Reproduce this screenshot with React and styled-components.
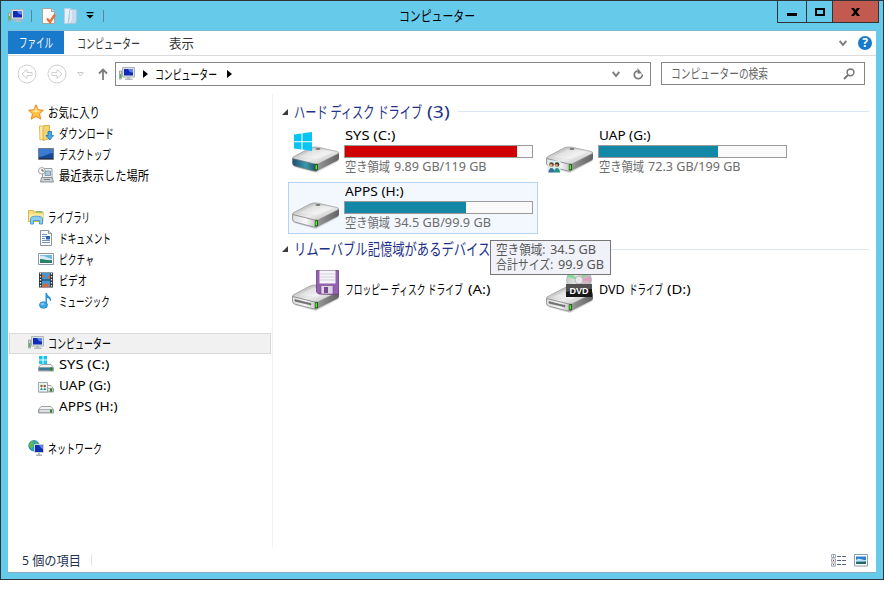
import React, { useLayoutEffect, useRef, useState } from "react";
import styled, { createGlobalStyle } from "styled-components";

const Global = createGlobalStyle`
  * { box-sizing: border-box; }
  body {
    margin: 0;
    background: #fff;
    overflow: hidden;
    font-family: "Noto Sans", "Noto Sans CJK JP", sans-serif;
    font-size: 13px;
    color: #000;
  }
  svg { display: block; flex: none; }
`;

/* ---------- condensed label ---------- */
const LabelBox = styled.span`
  display: block;
  flex: none;
  width: ${(p) => p.$w}px;
  height: ${(p) => p.$h || 18}px;
  line-height: ${(p) => p.$h || 18}px;
  font-size: ${(p) => p.$size || 13}px;
  color: ${(p) => p.$color || "#000"};
  margin-left: ${(p) => p.$ml || 0}px;
`;
const LabelText = styled.span`
  display: inline-block;
  vertical-align: top;
  white-space: pre;
  transform-origin: 0 50%;
`;
function Label({ w, h, size, color, ml, children }) {
  const ref = useRef(null);
  const [k, setK] = useState(1);
  useLayoutEffect(() => {
    setK(w / ref.current.offsetWidth);
  }, [w]);
  return (
    <LabelBox $w={w} $h={h} $size={size} $color={color} $ml={ml}>
      <LabelText ref={ref} style={{ transform: `scaleX(${k})` }}>{children}</LabelText>
    </LabelBox>
  );
}
const TextRun = styled.div`
  display: flex;
  padding-bottom: ${(p) => p.$up || 0}px;
`;
/* parts: [text, width, gap before] */
const Run = ({ parts, up, ...rest }) => (
  <TextRun $up={up}>
    {parts.map(([t, w, ml], i) => (
      <Label key={i} w={w} ml={ml} {...rest}>{t}</Label>
    ))}
  </TextRun>
);

/* ---------- window frame ---------- */
const Window = styled.div`
  position: relative;
  width: 884px;
  height: 580px;
  background: #66cbea;
  border: 1px solid #2f3438;
  display: flex;
  flex-direction: column;
`;
const TitleBar = styled.header`
  height: 29px;
  display: grid;
  grid-template-columns: 391px 76px 1fr;
  padding-left: 7px;
`;
const QuickAccess = styled.div`
  display: flex;
  height: 29px;
  align-items: center;
`;
const Separator = styled.i`
  width: 1px;
  height: 12px;
  background: #5e8596;
  margin: 0 ${(p) => p.$r || 0}px 0 ${(p) => p.$l || 0}px;
`;
const Gap = styled.i`
  flex: none;
  width: ${(p) => p.$w}px;
`;
const TitleText = styled.h1`
  margin: 0;
  padding-top: 5px;
  font-weight: 400;
`;
const CaptionButtons = styled.div`
  display: flex;
  justify-content: flex-end;
  margin: -1px 4px 0 0;
`;
const CaptionButton = styled.button`
  width: ${(p) => p.$w}px;
  height: 23px;
  margin: 0 0 0 -1px;
  padding: 0;
  border: 1px solid #2f3438;
  background: ${(p) => (p.$close ? "#c35a50" : "#66cbea")};
  display: flex;
  align-items: center;
  justify-content: center;
`;
const Client = styled.main`
  margin: 0 7px 0;
  height: 543px;
  background: #fff;
  border-top: 1px solid #7db9d1;
  border-bottom: 1px solid #83aec3;
  display: flex;
  flex-direction: column;
`;
const Ribbon = styled.nav`
  height: 25px;
  border-bottom: 1px solid #dadbdc;
  display: flex;
  align-items: center;
  padding-right: 4px;
`;
const FileTab = styled.div`
  width: 56px;
  height: 23px;
  margin-bottom: 1px;
  background: #1979ca;
  padding: 2px 0 0 11px;
`;
const Spacer = styled.div`flex: 1;`;
const NavBar = styled.div`
  height: 38px;
  display: flex;
  padding: 6px 11px 0 9px;
`;
const NavButtons = styled.div`
  width: 98px;
  height: 24px;
  display: flex;
  align-items: center;
`;
const Field = styled.div`
  width: ${(p) => p.$w}px;
  height: ${(p) => p.$h}px;
  border: 1px solid #858585;
  display: flex;
  align-items: center;
  padding: 0 6px 0 ${(p) => p.$pl}px;
  margin-right: ${(p) => p.$mr || 0}px;
`;
const Body = styled.div`
  display: flex;
  height: 454px;
`;
const Tree = styled.aside`
  width: 265px;
  padding: 8px 1px 0 1px;
  border-right: 1px solid #f1f1f1;
`;
const TreeRow = styled.div`
  height: 21px;
  display: flex;
  align-items: center;
  gap: ${(p) => (p.$child ? 5 : 4)}px;
  padding-left: ${(p) => (p.$child ? 29 : 19)}px;
  padding-bottom: 1px;
  margin-bottom: ${(p) => (p.$last ? 21 : 0)}px;
  background: ${(p) => (p.$selected ? "#f1f1f1" : "transparent")};
  outline: ${(p) => (p.$selected ? "1px solid #dadada" : "none")};
  outline-offset: -1px;
`;
const Content = styled.section`
  flex: 1;
  padding: 4px 7px 0 8px;
`;
const GroupHeader = styled.div`
  height: ${(p) => p.$h}px;
  padding-bottom: ${(p) => p.$pb || 0}px;
  display: flex;
  align-items: center;
`;
const Rule = styled.i`
  flex: 1;
  height: 1px;
  margin-left: 8px;
  background: #d9e8f4;
`;
const Tiles = styled.div`
  display: grid;
  grid-template-columns: 250px 250px;
  column-gap: 4px;
  row-gap: 4px;
  margin-left: 7px;
`;
const Tile = styled.div`
  height: 52px;
  display: flex;
  align-items: ${(p) => (p.$center ? "center" : "stretch")};
  padding: 1px 3px;
  border: 1px solid ${(p) => (p.$hot ? "#b5d3f2" : "transparent")};
  background: ${(p) => (p.$hot ? "#f3f8ff" : "transparent")};
`;
const TileInfo = styled.div`
  margin-left: 4px;
  display: flex;
  flex-direction: column;
`;
const Meter = styled.div`
  width: 189px;
  height: 13px;
  margin-top: 2px;
  border: 1px solid #9b9b9b;
  background: #fafafa;
`;
const MeterFill = styled.div`
  height: 11px;
  background: ${(p) => (p.$full ? "#d10000" : "#1388a6")};
`;
const Tooltip = styled.div`
  position: absolute;
  left: 489px;
  top: 239px;
  width: 121px;
  height: 35px;
  background: #f1f2f9;
  border: 1px solid #767676;
  padding: 1px 0 0 5px;
`;
const StatusBar = styled.footer`
  height: 24px;
  display: flex;
  align-items: center;
  padding: 0 8px 0 14px;
`;

/* ---------- icons ---------- */
const ComputerIcon = () => (
  <svg width="16" height="16" viewBox="0 0 16 16">
    <path d="M.5 5h2v8h-2z" fill="#d8dcdf" stroke="#8c9499" strokeWidth=".8" />
    <path d="M1 8h1v4H1z" fill="#35c829" />
    <path d="M3.500 1.500h12v9.500h-12z" fill="#dfe3e8" stroke="#aab3ba" />
    <path d="M5 3h9v6.500H5z" fill="#102bb5" />
    <path d="M9 3h5v3.500C11 7 10 5 9 3z" fill="#5c84e8" />
    <path d="M8 11h3v1.500h2.500V14H6v-1.500h2z" fill="#b4bcc2" />
  </svg>
);
const PropertiesIcon = () => (
  <svg width="16" height="16" viewBox="0 0 16 16">
    <path d="M1.500.5h9l3 3v12h-12z" fill="#fbfbfa" stroke="#a9a39b" />
    <path d="M10.500 .5v3h3" fill="#ddd" stroke="#a9a39b" />
    <path d="M6 10.500l3 3.500 5-7.500" fill="none" stroke="#e8713b" strokeWidth="2.300" />
  </svg>
);
const NewFolderIcon = () => (
  <svg width="14" height="16" viewBox="0 0 14 16">
    <path d="M.5.5h5l3 1v14h-8z" fill="#e9f1f8" stroke="#b9d0e2" />
    <path d="M6 1.500h6.500V12l-1 3.500H4z" fill="#c9dcec" stroke="#a8c6dd" />
    <path d="M7 2v10l-2 3" stroke="#f8fbfd" fill="none" />
  </svg>
);
const CustomizeIcon = () => (
  <svg width="8" height="7" viewBox="0 0 8 7">
    <path d="M.5 0h7v1.300H.5zM.5 3h7L4 6.500z" fill="#000" />
  </svg>
);
const RoundArrow = ({ flip }) => (
  <svg width="20" height="20" viewBox="0 0 20 20" fill="none" stroke="#d0d0d0">
    <circle cx="10" cy="10" r="9" />
    {flip ? (
      <path d="M5 8.500h5V5.500l5 4.500-5 4.500v-3H5z" />
    ) : (
      <path d="M15 8.500h-5V5.500L5 10l5 4.500v-3h5z" />
    )}
  </svg>
);
const RecentIcon = () => (
  <svg width="7" height="5" viewBox="0 0 7 5">
    <path d="M.7.5h5.600L3.500 4z" fill="none" stroke="#ccc" />
  </svg>
);
const UpIcon = () => (
  <svg width="10" height="12" viewBox="0 0 10 12" fill="none" stroke="#7c7c7c" strokeWidth="1.800">
    <path d="M5 12V1.500M1 5.500l4-4 4 4" />
  </svg>
);
const Crumb = () => (
  <svg width="5" height="8" viewBox="0 0 5 8"><path d="M0 0l5 4-5 4z" fill="#000" /></svg>
);
const Chevron = () => (
  <svg width="8" height="7" viewBox="0 0 8 7">
    <path d="M.7 1L4 5l3.300-4" fill="none" stroke="#828282" strokeWidth="2" />
  </svg>
);
const RefreshIcon = () => (
  <svg width="11" height="12" viewBox="0 0 11 12">
    <path d="M4.500 2.800A4 4 0 1 0 9.300 6.500" fill="none" stroke="#777" strokeWidth="1.700" />
    <path d="M4.500 0v5.500H9z" fill="#777" />
  </svg>
);
const SearchIcon = () => (
  <svg width="12" height="12" viewBox="0 0 12 12" fill="none" stroke="#777">
    <circle cx="7.500" cy="4.300" r="3.400" strokeWidth="1.500" />
    <path d="M5 7L1 11" strokeWidth="2" />
  </svg>
);
const HelpMark = styled.span`
  width: 14px;
  height: 14px;
  margin-left: 11px;
  border-radius: 50%;
  background: #1979ca;
  color: #fff;
  font: 700 12px/14px "Noto Sans", sans-serif;
  text-align: center;
`;
const StarIcon = () => (
  <svg width="16" height="16" viewBox="0 0 16 16">
    <path d="M8 .8l2.200 4.900 5.200.6-3.900 3.500 1.200 5.300L8 12.400l-4.700 2.700 1.200-5.300L.6 6.300l5.200-.6z" fill="#ffc23f" stroke="#ee8324" />
    <path d="M8 3l1.500 3.500 3 .5L8 8.500 3.500 7l3-.5z" fill="#ffe99a" />
  </svg>
);
const DownloadIcon = () => (
  <svg width="16" height="16" viewBox="0 0 16 16">
    <path d="M1.500 1h5l1 13-5.500 1z" fill="#fff0b1" stroke="#dfbc58" />
    <path d="M6 .5h5.500v13L5 15.500V3z" fill="#f4d470" stroke="#d9b043" />
    <path d="M10 6.500h3.500v4h2L11.800 15 8 10.500h2z" fill="#43aaf0" stroke="#176fb5" strokeWidth=".8" />
  </svg>
);
const DesktopIcon = () => (
  <svg width="16" height="16" viewBox="0 0 16 16">
    <path d="M.5 2.500h15v11H.5z" fill="#16489b" stroke="#767b85" />
    <path d="M1 3h14v4C10 7.500 5 11 1 11z" fill="#3b7bcf" />
    <path d="M1 12.500h14" stroke="#243349" />
  </svg>
);
const RecentPlacesIcon = () => (
  <svg width="16" height="16" viewBox="0 0 16 16">
    <path d="M4.500 1.500h9.500v9.500h-9.500z" fill="#eef2f5" stroke="#98a0a6" />
    <path d="M7 4h5.500v4.500H7z" fill="#a9cbe0" stroke="#6c8290" strokeWidth=".7" />
    <path d="M3.500 10.500h10.500l1.500 4.500h-13z" fill="#cbd0d3" stroke="#899197" />
    <path d="M6 12.500h6" stroke="#7c858b" />
    <circle cx="3.800" cy="3.800" r="3.300" fill="#f7f7f7" stroke="#a2a6aa" />
    <path d="M4 2v2h2" fill="none" stroke="#666" />
  </svg>
);
const LibraryIcon = () => (
  <svg width="16" height="16" viewBox="0 0 16 16">
    <path d="M.5 12.500v-11h5l1 1.500h8.500v9.500z" fill="#f8dd7d" stroke="#d8b551" />
    <path d="M1 5h14v7H1z" fill="#fae99f" />
    <path d="M8 2h6v1.500H8z" fill="#77b965" />
    <path d="M2.500 15V9.500c0-3 12-3 12 0V15h-3v-3.500h-6V15z" fill="#8bcdf1" stroke="#4d9ed0" />
  </svg>
);
const DocumentIcon = () => (
  <svg width="16" height="16" viewBox="0 0 16 16">
    <path d="M2.500.5h8l3 3v12h-11z" fill="#fcfdff" stroke="#8b949c" />
    <path d="M10.500.5v3h3" fill="#ddd" stroke="#8b949c" />
    <path d="M4 4.500h5M4 6.500h4M4 8.500h3M4 10.500h8M4 12.500h8" stroke="#7895b4" />
    <path d="M8 6h4v3.500H8z" fill="#2866aa" />
  </svg>
);
const PictureIcon = () => (
  <svg width="16" height="16" viewBox="0 0 16 16">
    <path d="M.5 2.500h15v11H.5z" fill="#fff" stroke="#8b96a0" />
    <path d="M2 4h12v8H2z" fill="#6eb7e6" />
    <path d="M2 5c5-1 6 2 12 3v1H2z" fill="#d3edf7" />
    <path d="M2 8c5 0 8 2 12 1v3H2z" fill="#2b806a" />
  </svg>
);
const VideoIcon = () => (
  <svg width="16" height="16" viewBox="0 0 16 16">
    <path d="M1 .5h14v15H1z" fill="#29323a" />
    <path d="M4 1h8v6.500H4zM4 8.500h8V15H4z" fill="#3d99d8" />
    <path d="M4 2l3 2.500L4 6zM12 2v5l-3-1.500zM4 14l3-3 4 1.500V15H4z" fill="#d36843" />
    <path d="M2.500 1v15M13.500 1v15" stroke="#eee" strokeWidth="1.300" strokeDasharray="1.500 1.500" />
  </svg>
);
const MusicIcon = () => (
  <svg width="16" height="16" viewBox="0 0 16 16">
    <path d="M7.500 0H9c0 3 5 3.500 4 8h-1c0-2-1.500-3-3-3v7H7.500z" fill="#2c91d8" />
    <ellipse cx="5.500" cy="12" rx="4" ry="3.300" fill="#3ba9ed" stroke="#1972b9" strokeWidth=".7" />
    <ellipse cx="4.500" cy="11" rx="2" ry="1" fill="#8dd5fb" />
  </svg>
);
const NetworkIcon = () => (
  <svg width="16" height="16" viewBox="0 0 16 16">
    <circle cx="6" cy="5.700" r="5.300" fill="#269ddf" stroke="#1b6cae" strokeWidth=".6" />
    <path d="M3 1c3-1 3 1 1.500 2L6 5 3.500 9 1 6zM7 1l3 2-2 2z" fill="#62bd3b" />
    <path d="M6.500 4.500h9v8h-9z" fill="#102db5" stroke="#cdd4db" />
    <path d="M11 5h4v4c-2-.5-3-2-4-4z" fill="#5581e3" />
    <path d="M10 13h2v1.500h2V16H8v-1.500h2z" fill="#aab3ba" />
  </svg>
);
const SmallDrive = ({ kind }) => (
  <svg width="16" height="16" viewBox="0 0 16 16">
    {kind === "win" && <path d="M1 0h3.500v3.500H1zM5.500 0H9v3.500H5.500zM1 4.500h3.500V8H1zM5.500 4.500H9V8H5.500z" fill="#15c3f5" />}
    <path d="M.5 11.500L3 8.500h10l2.500 3v3.500H.5z" fill="#f0f1f1" stroke="#a3a6a9" />
    <path d="M1 11.500h14v3H1z" fill={kind === "win" ? "#397b98" : "#dcdee1"} stroke="#8a8d90" strokeWidth=".6" />
    <path d="M12 11.500h2v3h-2z" fill="#258b20" />
    {kind === "users" && (
      <g>
        <path d="M.5 5.500h9v9.500h-9z" fill="#eef5f6" stroke="#99a9aa" />
        <circle cx="3.500" cy="9" r="1.200" fill="#8c5b34" /><circle cx="6.700" cy="9" r="1.200" fill="#8c5b34" />
        <path d="M2 13l1.500-2.500L5 13zM5.300 13l1.500-2.500L8.300 13z" fill="#388983" />
      </g>
    )}
  </svg>
);
const DriveIcon = ({ kind, id }) => (
  <svg width="48" height="48" viewBox="0 0 48 48">
    <defs>
      <linearGradient id={`top${id}`} x1="0" y1="0" x2="1" y2="1">
        <stop offset="0" stopColor="#a8a8a8" />
        <stop offset=".55" stopColor="#ececec" />
        <stop offset="1" stopColor="#b0b0b0" />
      </linearGradient>
      <linearGradient id={`side${id}`} x1="0" y1="0" x2="1" y2="0">
        <stop offset="0" stopColor="#9a9a9a" />
        <stop offset="1" stopColor="#626262" />
      </linearGradient>
      <linearGradient id={`front${id}`} x1="0" y1="0" x2="1" y2="0">
        <stop offset="0" stopColor={kind === "win" ? "#1d4d74" : "#dedede"} />
        <stop offset=".55" stopColor={kind === "win" ? "#399aa8" : "#f8f8fc"} />
        <stop offset="1" stopColor={kind === "win" ? "#1b4a63" : "#bdbdbd"} />
      </linearGradient>
      <linearGradient id={`disc${id}`}>
        <stop offset="0" stopColor="#c4cfc5" />
        <stop offset=".45" stopColor="#e8e8e8" />
        <stop offset=".7" stopColor="#d9b5cb" />
        <stop offset="1" stopColor="#bbb" />
      </linearGradient>
    </defs>
    <g transform={kind === "dvd" ? "translate(0 2)" : undefined}>
      <path d="M2 39l22 6 23-12-1-2z" fill="#000" opacity=".14" />
      <path d="M24 35l22-10.500q1 0 1 2v4q0 1-1.500 2L26 42.500q-1 .7-2 .5z" fill={`url(#side${id})`} />
      <path d="M1 29L18 20q3-1.500 7-1l20 4.500q2 .5 1.500 2L26 36q-2 1-5 .3L1.500 31q-1.500-1-.5-2z" fill={`url(#top${id})`} stroke="#888" strokeWidth=".6" />
      <path d="M7 29l14-7.500 6-.5 13 3-15 7z" fill="#fff" opacity=".35" />
      <path d="M.5 30.500l21 5.200q2.500.5 3.500.3v7q-2 .3-4-.2L2.500 38Q.5 37.500.5 35z" fill={`url(#front${id})`} stroke="#777" strokeWidth=".7" />
      <path d="M22.800 36.500l3-.6V42l-3 .5z" fill="#164f13" />
      <path d="M23.500 37.300l1.500-.3v4.300l-1.500.3z" fill="#54ed28" />
      <ellipse cx="26" cy="21" rx="2.500" ry=".9" fill="#777" />
      {(kind === "floppy" || kind === "dvd") && <path d="M3 33.500l16 4v1.600L3 35.200z" fill="#777" stroke="#444" strokeWidth=".4" />}
    </g>
    {kind === "win" && <path d="M2 6.500L9.500 5.500v7.700H2zM10.500 5.300L20 4v9.200h-9.500zM2 14.200h7.500v7.300L2 20.400zM10.500 14.200H20V23l-9.500-1.400z" fill="#08c4f4" />}
    {kind === "users" && (
      <g>
        <path d="M1.500 32.500h13v12h-13z" fill="#d7eeee" />
        <circle cx="5.500" cy="36.500" r="2.300" fill="#6f412a" /><circle cx="11" cy="36.500" r="2.300" fill="#433125" />
        <circle cx="5" cy="37.500" r="1.400" fill="#e3ad86" /><circle cx="10.500" cy="37.500" r="1.400" fill="#dda278" />
        <path d="M2.500 44.500c0-6 6-6 6 0z" fill="#3a6c9b" /><path d="M8 44.500c0-6 6-6 6 0z" fill="#29918c" />
      </g>
    )}
    {kind === "floppy" && (
      <g>
        <path d="M24.500 4.500h22v24l-20-.5-2-2z" fill="#9560b2" stroke="#69407f" strokeWidth=".8" />
        <path d="M27.500 4.500h16v13h-16z" fill="#f5f4f8" />
        <path d="M27.500 8h16M27.500 11h16M27.500 14h16" stroke="#c8bfd0" strokeWidth=".7" />
        <path d="M29 19.500h12v8.500H29z" fill="#ddd4e4" stroke="#765087" strokeWidth=".6" />
        <path d="M32 21h4v6h-4z" fill="#774b91" />
      </g>
    )}
    {kind === "dvd" && (
      <g>
        <circle cx="33" cy="14" r="12.500" fill={`url(#disc${id})`} stroke="#aaa" strokeWidth=".6" />
        <path d="M33 14L21 11l3-5zM33 14l7-10 4 4z" fill="#77d98a" opacity=".8" />
        <path d="M33 14l11-3 1 4z" fill="#e88bbb" opacity=".6" />
        <circle cx="33" cy="14" r="4" fill="#e8e8e8" stroke="#999" strokeWidth=".6" />
        <path d="M20 18h26v13H20z" fill="#181818" />
        <path d="M20 18h26v5c-9 0-16 0-26 3z" fill="#525252" />
        <text x="33" y="28" fontFamily="Liberation Sans, sans-serif" fontWeight="700" fontSize="9" textAnchor="middle" textLength="19" lengthAdjust="spacingAndGlyphs" fill="#fff">DVD</text>
      </g>
    )}
  </svg>
);
const Triangle = () => (
  <svg width="7" height="6" viewBox="0 0 7 6"><path d="M7 0v6H1z" fill="#3c3c3c" /></svg>
);
const DetailsIcon = () => (
  <svg width="15" height="13" viewBox="0 0 15 13">
    <path d="M.5.5h4v3h-4zM.5 4.900h4v3h-4zM.5 9.200h4v3h-4z" fill="#fff" stroke="#a0aab6" />
    <path d="M2 1.500h1v1H2zM2 10.200h1v1H2z" fill="#333f60" />
    <path d="M2 5.900h1v1H2z" fill="#c22" />
    <path d="M6 2.500h4M11 2.500h4M6 6.500h4M11 6.500h4M6 10.500h4M11 10.500h4" stroke="#5b6280" />
  </svg>
);
const LargeIconsIcon = () => (
  <svg width="14" height="13" viewBox="0 0 14 13">
    <path d="M.5.5h13v11.500H.5z" fill="#fff" stroke="#8b9cac" />
    <path d="M2 2.500h10V10H2z" fill="#2b7ed0" />
    <path d="M2 6c3-3 6 0 10 0v1.500H2z" fill="#bfe2f4" />
    <path d="M2 8.500c4-1 7 0 10-1V10H2z" fill="#256c57" />
  </svg>
);

/* ---------- data ---------- */
const tree = [
  { t: "お気に入り", w: 52, icon: <StarIcon /> },
  { t: "ダウンロード", w: 55, icon: <DownloadIcon />, child: true },
  { t: "デスクトップ", w: 52, icon: <DesktopIcon />, child: true },
  { t: "最近表示した場所", w: 90, icon: <RecentPlacesIcon />, child: true, last: true },
  { t: "ライブラリ", w: 42, icon: <LibraryIcon /> },
  { t: "ドキュメント", w: 52, icon: <DocumentIcon />, child: true },
  { t: "ピクチャ", w: 35, icon: <PictureIcon />, child: true },
  { t: "ビデオ", w: 28, icon: <VideoIcon />, child: true },
  { t: "ミュージック", w: 51, icon: <MusicIcon />, child: true, last: true },
  { t: "コンピューター", w: 63, icon: <ComputerIcon />, selected: true },
  { t: "SYS (C:)", w: 51, icon: <SmallDrive kind="win" />, child: true },
  { t: "UAP (G:)", w: 52, icon: <SmallDrive kind="users" />, child: true },
  { t: "APPS (H:)", w: 58, icon: <SmallDrive />, child: true, last: true },
  { t: "ネットワーク", w: 54, icon: <NetworkIcon /> },
];
const disks = [
  { id: "c", kind: "win", t: "SYS (C:)", w: 51, pct: 92.2, full: true, cap: [["空き領域", 45, 1], ["9.89 GB/119 GB", 93, 4]] },
  { id: "g", kind: "users", t: "UAP (G:)", w: 52, pct: 63.7, cap: [["空き領域", 45, 1], ["72.3 GB/199 GB", 93, 4]] },
  { id: "h", t: "APPS (H:)", w: 58, pct: 64.8, cap: [["空き領域", 45, 1], ["34.5 GB/99.9 GB", 97, 4]], hot: true },
];

export default function App() {
  return (
    <>
      <Global />
      <Window>
        <TitleBar>
          <QuickAccess>
            <ComputerIcon />
            <Separator $l={7} $r={9} />
            <PropertiesIcon />
            <Gap $w={7} />
            <NewFolderIcon />
            <Gap $w={8} />
            <CustomizeIcon />
            <Separator $l={9} />
          </QuickAccess>
          <TitleText><Label w={76} size={14} h={20}>コンピューター</Label></TitleText>
          <CaptionButtons>
            <CaptionButton $w={30} aria-label="最小化">
              <svg width="10" height="10" viewBox="0 0 10 10"><path d="M0 6h10v3H0z" /></svg>
            </CaptionButton>
            <CaptionButton $w={27} aria-label="最大化">
              <svg width="10" height="8" viewBox="0 0 10 8"><path d="M1 1h8v6H1z" fill="none" stroke="#000" strokeWidth="2" /></svg>
            </CaptionButton>
            <CaptionButton $w={47} $close aria-label="閉じる">
              <svg width="9" height="8" viewBox="0 0 9 8"><path d="M0 0h3l1.500 2L6 0h3L6 4l3 4H6L4.500 6 3 8H0l3-4z" /></svg>
            </CaptionButton>
          </CaptionButtons>
        </TitleBar>
        <Client>
          <Ribbon>
            <FileTab><Label w={34} color="#fff">ファイル</Label></FileTab>
            <Label w={63} ml={13} color="#333">コンピューター</Label>
            <Label w={25} ml={29} color="#333">表示</Label>
            <Spacer />
            <Chevron />
            <HelpMark>?</HelpMark>
          </Ribbon>
          <NavBar>
            <NavButtons>
              <RoundArrow />
              <Gap $w={10} />
              <RoundArrow flip />
              <Gap $w={10} />
              <RecentIcon />
              <Gap $w={14} />
              <UpIcon />
            </NavButtons>
            <Field $w={536} $h={24} $pl={3} $mr={10}>
              <ComputerIcon />
              <Gap $w={8} />
              <Crumb />
              <Label w={62} ml={7}>コンピューター</Label>
              <Gap $w={10} />
              <Crumb />
              <Spacer />
              <Chevron />
              <Gap $w={13} />
              <RefreshIcon />
            </Field>
            <Field $w={204} $h={23} $pl={9}>
              <TextRun $up={2}><Label w={97} color="#666">コンピューターの検索</Label></TextRun>
              <Spacer />
              <SearchIcon />
              <Gap $w={3} />
            </Field>
          </NavBar>
          <Body>
            <Tree>
              {tree.map((r, i) => (
                <TreeRow key={i} $child={r.child} $last={r.last} $selected={r.selected}>
                  {r.icon}
                  <Run up={1} parts={[[r.t, r.w, 0]]} />
                </TreeRow>
              ))}
            </Tree>
            <Content>
              <GroupHeader $h={28} $pb={1}>
                <Triangle />
                <Run parts={[["ハード ディスク ドライブ", 128, 6], ["(3)", 23, 5]]} size={16} h={24} color="#1e3287" />
                <Rule />
              </GroupHeader>
              <Tiles>
                {disks.map((d) => (
                  <Tile key={d.id} $hot={d.hot}>
                    <DriveIcon kind={d.kind} id={d.id} />
                    <TileInfo>
                      <Label w={d.w} ml={1} h={15}>{d.t}</Label>
                      <Meter><MeterFill $full={d.full} style={{ width: `${d.pct}%` }} /></Meter>
                      <Run parts={d.cap} h={16} color="#6d6d6d" />
                    </TileInfo>
                  </Tile>
                ))}
              </Tiles>
              <GroupHeader $h={30}>
                <Triangle />
                <Run parts={[["リムーバブル記憶域があるデバイス", 196, 6]]} size={16} h={24} color="#1e3287" />
                <Rule />
              </GroupHeader>
              <Tiles>
                <Tile $center>
                  <DriveIcon kind="floppy" id="a" />
                  <Run up={2} parts={[["フロッピー ディスク ドライブ", 118, 5], ["(A:)", 23, 5]]} />
                </Tile>
                <Tile $center>
                  <DriveIcon kind="dvd" id="d" />
                  <Run up={2} parts={[["DVD", 26, 5], ["ドライブ", 34, 4], ["(D:)", 24, 4]]} />
                </Tile>
              </Tiles>
            </Content>
          </Body>
          <StatusBar>
            <Label w={59} color="#1e3250">5 個の項目</Label>
            <Gap $w={10} />
            <svg width="1" height="12"><path d="M0 0h1v12H0z" fill="#e6e6e6" /></svg>
            <Spacer />
            <DetailsIcon />
            <Gap $w={8} />
            <LargeIconsIcon />
          </StatusBar>
        </Client>
        <Tooltip>
          <Run parts={[["空き領域:", 49, 0], ["34.5 GB", 46, 5]]} h={15} color="#575757" />
          <Run parts={[["合計サイズ:", 57, 0], ["99.9 GB", 46, 5]]} h={15} color="#575757" />
        </Tooltip>
      </Window>
    </>
  );
}
